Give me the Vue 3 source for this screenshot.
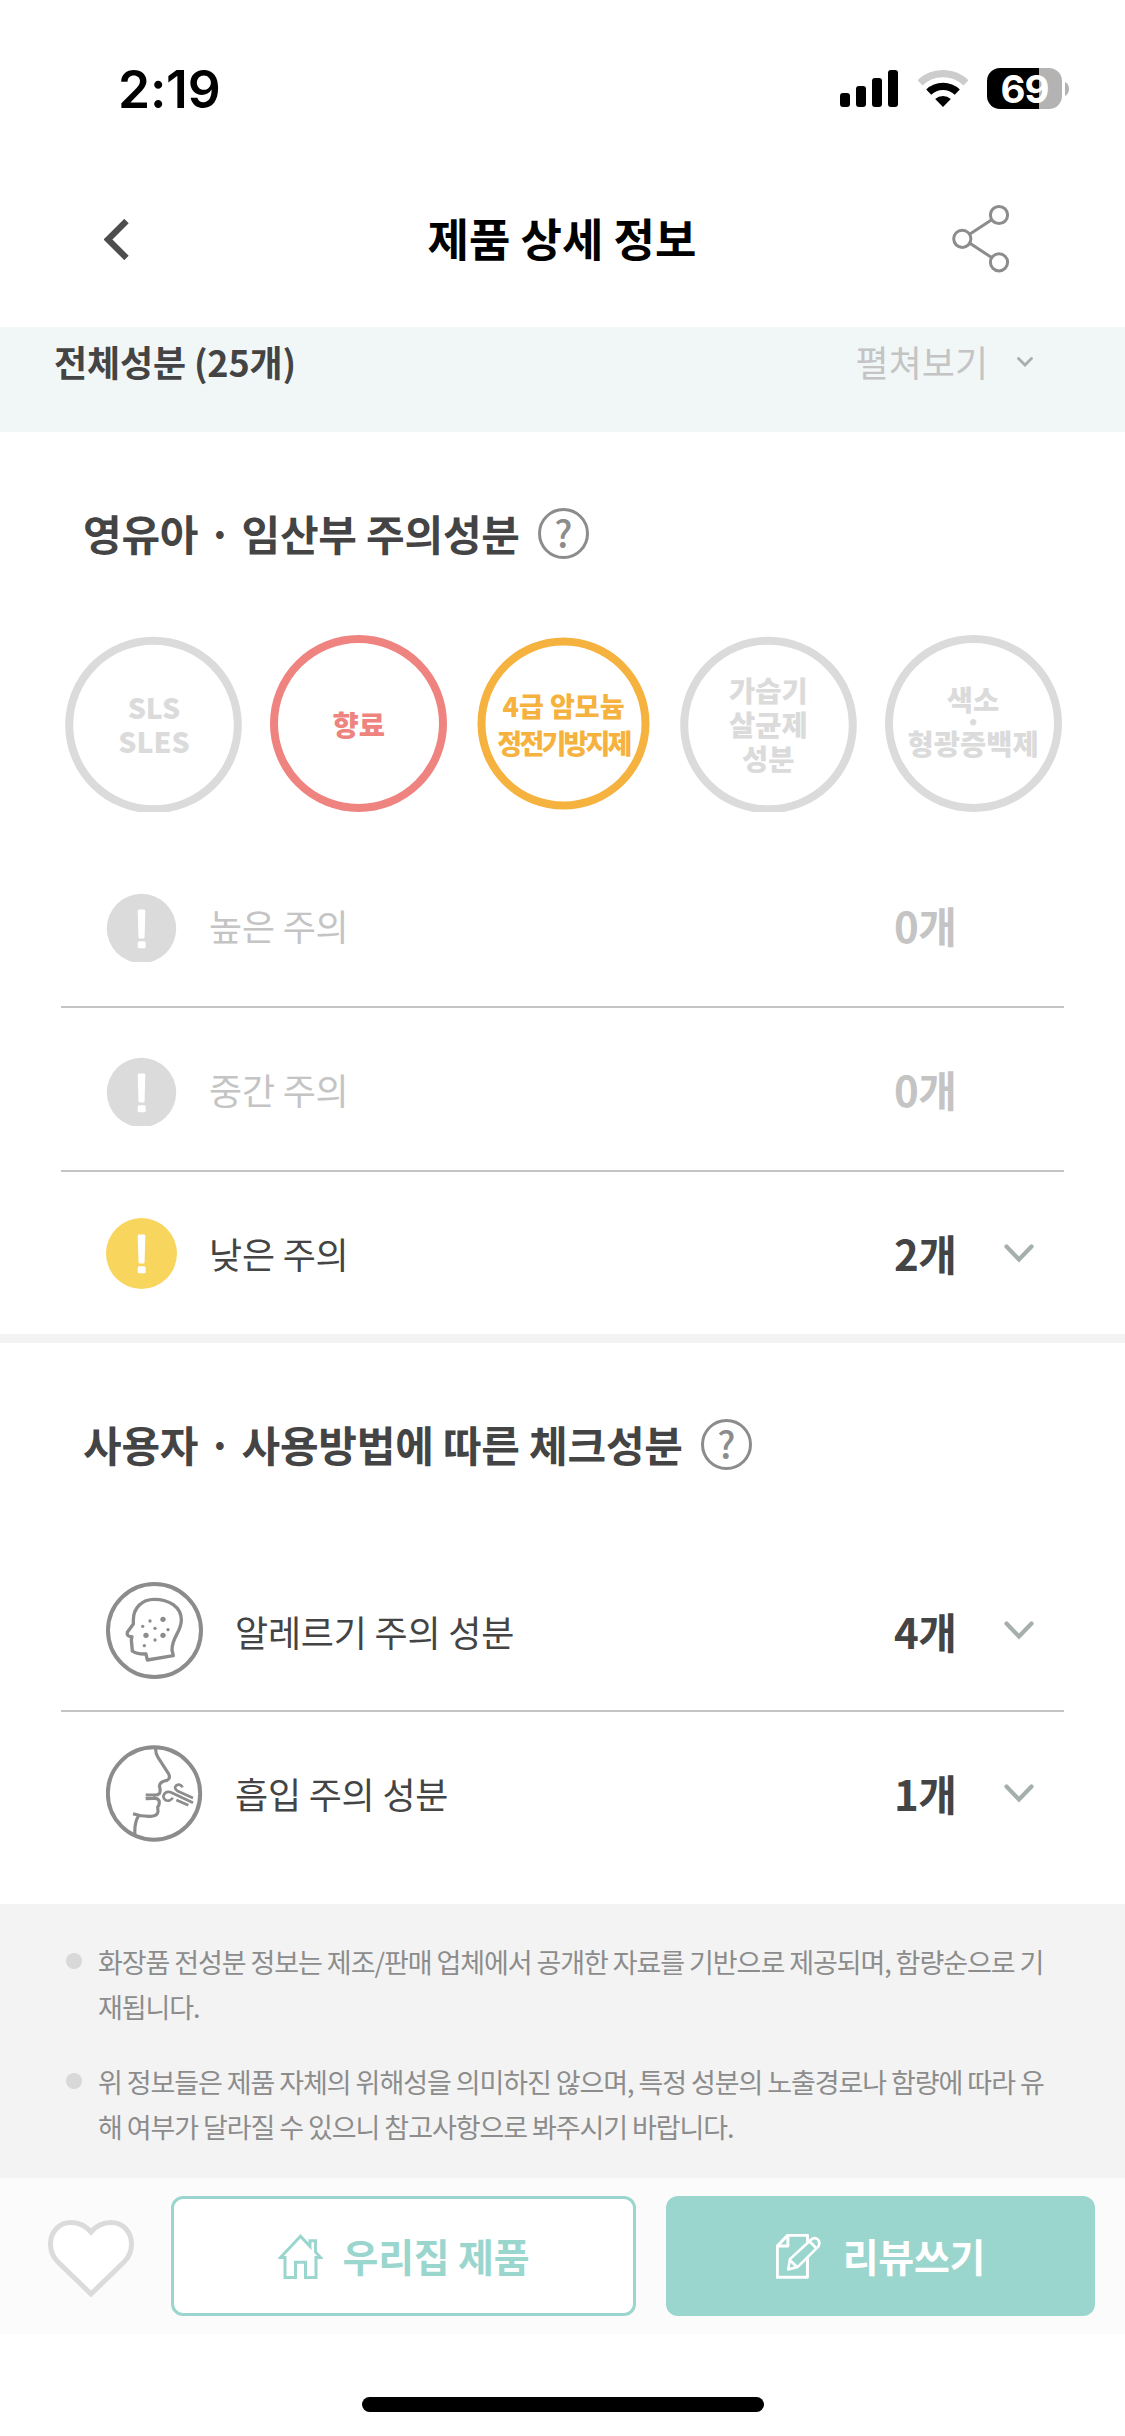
<script setup>
const tags = [
  { lines: ['SLS', 'SLES'], tone: 'off', cy: 90, r: 84.3 },
  { lines: ['향료'], tone: 'red', cy: 88.5, r: 84.5 },
  { lines: ['4급 암모늄', '정전기방지제'], tone: 'amber', cy: 88.5, r: 82 },
  { lines: ['가습기', '살균제', '성분'], tone: 'off', cy: 90, r: 84.3 },
  { lines: ['색소', '·', '형광증백제'], tone: 'off dotted', cy: 88.5, r: 84.5 },
]
const levels = [
  { name: '높은 주의', count: '0개', tone: 'off' },
  { name: '중간 주의', count: '0개', tone: 'off' },
  { name: '낮은 주의', count: '2개', tone: 'low' },
]
const checks = [
  { name: '알레르기 주의 성분', count: '4개', icon: 'head' },
  { name: '흡입 주의 성분', count: '1개', icon: 'breath' },
]
const notes = [
  ['화장품 전성분 정보는 제조/판매 업체에서 공개한 자료를 기반으로 제공되며, 함량순으로 기', '재됩니다.'],
  ['위 정보들은 제품 자체의 위해성을 의미하진 않으며, 특정 성분의 노출경로나 함량에 따라 유', '해 여부가 달라질 수 있으니 참고사항으로 봐주시기 바랍니다.'],
]
</script>

<template>
  <div class="screen">
    <div class="status">
      <span class="time">2:19</span>
      <div class="status-icons">
        <svg class="signal" viewBox="0 0 58 37">
          <rect x="0" y="23" width="10" height="14" rx="3" />
          <rect x="16" y="16" width="10" height="21" rx="3" />
          <rect x="32" y="8" width="10" height="29" rx="3" />
          <rect x="48" y="0" width="10" height="37" rx="3" />
        </svg>
        <svg class="wifi" viewBox="262 60 150 111" fill="none" stroke-width="22">
          <path d="M268 98.6A100 100 0 0 1 406 98.6" stroke="#ccc" />
          <path d="M294.2 126.1A62 62 0 0 1 379.8 126.1" stroke="#000" />
          <path d="M337 171L313.500 147A36 36 0 0 1 360.500 147Z" fill="#000" />
        </svg>
        <div class="battery"><span>69</span></div>
        <svg class="battery-cap" viewBox="0 0 4 14"><path d="M0 0Q4 2 4 7T0 14Z" fill="#b3b3b3" /></svg>
      </div>
    </div>

    <header class="header">
      <svg class="back" viewBox="0 0 25 41"><path d="M22.500 2L4 20.500L22.500 39" fill="none" stroke="#4d4d4d" stroke-width="6.200" /></svg>
      <h1>제품 상세 정보</h1>
      <svg class="share" viewBox="0 0 58 70" fill="none" stroke="#8c8c8c" stroke-width="3">
        <circle cx="47" cy="11" r="8.600" /><circle cx="10.300" cy="34.800" r="8.600" /><circle cx="47" cy="58.300" r="8.600" />
        <path d="M17.600 30.200L39.700 15.800M17.900 39.200L39.700 53.600" />
      </svg>
    </header>

    <div class="all">
      <strong>전체성분 (25개)</strong>
      <span>펼쳐보기</span>
      <svg viewBox="0 0 16 10"><path d="M1.500 1.500L8 8L14.500 1.500" fill="none" stroke="#a5b0ad" stroke-width="2.800" stroke-linecap="round" /></svg>
    </div>

    <section class="care">
      <div class="title">
        <h2>영유아 · 임산부 주의성분</h2><span class="help">?</span>
      </div>
      <div class="tags">
        <div v-for="t in tags" :key="t.lines[0]" class="tag" :class="t.tone">
          <svg viewBox="0 0 177 177"><circle cx="88.500" :cy="t.cy" :r="t.r" fill="none" stroke="currentColor" stroke-width="8" /></svg>
          <div class="label"><span v-for="l in t.lines" :key="l" :class="{ dot: l === '·', tight: l.length === 6 && !l.includes(' ') }">{{ l }}</span></div>
        </div>
      </div>
      <div class="list">
        <div v-for="l in levels" :key="l.name" class="row" :class="l.tone">
          <svg class="bang" :viewBox="l.tone === 'low' ? '0 0 71 71' : '0 0 71 68.5'">
            <circle cx="35.500" cy="35.500" :r="l.tone === 'low' ? 35.5 : 34.7" fill="currentColor" />
            <path d="M33 16.500H38Q39.300 16.500 39.300 18L38.600 44Q38.600 45.500 37.200 45.500H34Q32.600 45.500 32.500 44L31.700 18Q31.700 16.500 33 16.500Z" fill="#fff" />
            <rect x="31.700" y="48.300" width="8" height="7" rx="1.500" fill="#fff" />
          </svg>
          <span class="name">{{ l.name }}</span>
          <strong>{{ l.count }}</strong>
          <svg v-if="l.tone === 'low'" class="chev" viewBox="0 0 30 19"><path d="M2.500 2.500L15 15.500L27.500 2.500" /></svg>
        </div>
      </div>
    </section>

    <section class="check">
      <div class="title">
        <h2>사용자 · 사용방법에 따른 체크성분</h2><span class="help">?</span>
      </div>
      <div class="list">
        <div v-for="c in checks" :key="c.name" class="row">
          <svg v-if="c.icon === 'head'" class="pic" viewBox="48 66 291 291" fill="none" stroke="#8c8c8c" stroke-width="10" stroke-linejoin="round">
            <circle cx="193.500" cy="211.500" r="139.500" stroke-width="12" />
            <path d="M172 300L250 287L246 270C246 230 274 216 274 180C274 140 236 118 193 118C155 118 130 145 130 180V192L112 217Q109 227 121 230H126L124 240L127 273Q140 283 168 282Z" />
            <g fill="#8c8c8c" stroke="none">
              <circle cx="158" cy="199" r="5" /><circle cx="180" cy="183" r="5" /><circle cx="219" cy="178" r="8" />
              <circle cx="195" cy="205" r="5" /><circle cx="234" cy="209" r="5" /><circle cx="168" cy="226" r="8" />
              <circle cx="219" cy="226" r="8" /><circle cx="195" cy="240" r="5" /><circle cx="163" cy="257" r="5" />
            </g>
          </svg>
          <svg v-else class="pic" viewBox="48 553 291 291" fill="none" stroke="#8c8c8c" stroke-width="9.500" stroke-linejoin="round">
            <circle cx="192" cy="698.500" r="138.500" stroke-width="12" />
            <path d="M197 562Q196 578 204 590L235 638Q243 653 231 659Q210 662 208 676Q213 690 208 699Q203 704 190 703L167 703M167 714L190 713Q204 712 207 720Q210 731 203 739L204 753Q203 766 182 767Q155 768 129 759M145 766Q132 790 135 822" />
            <path d="M309 712L264 692Q250 683 258 675Q270 667 278 680M309 726L242 695Q226 690 220 706Q222 722 237 720Q246 717 248 711M259 718L295 734" stroke-width="8" />
          </svg>
          <span class="name">{{ c.name }}</span>
          <strong>{{ c.count }}</strong>
          <svg class="chev" viewBox="0 0 30 19"><path d="M2.500 2.500L15 15.500L27.500 2.500" /></svg>
        </div>
      </div>
    </section>

    <ul class="notes">
      <li v-for="n in notes" :key="n[0]"><p><span v-for="l in n" :key="l">{{ l }}</span></p></li>
    </ul>

    <div class="bar">
      <svg class="heart" viewBox="0 0 86 77"><path d="M43 12C37 5 30 2.500 23 2.500C11 2.500 2.500 12 2.500 24C2.500 31 5 37 10 42L43 74L76 42C81 37 83.500 31 83.500 24C83.500 12 75 2.500 63 2.500C56 2.500 49 5 43 12Z" fill="#fff" stroke="#dbdbdb" stroke-width="5" /></svg>
      <button class="btn home">
        <svg viewBox="0 0 45 45" fill="none" stroke="currentColor" stroke-width="3"><path d="M22.500 2.200L2.500 23.500H7V43.500H17.500V28.200H27.500V43.500H38V23.500H42.500L37.500 18V6.700H32V12.500Z" /></svg>
        <span>우리집 제품</span>
      </button>
      <button class="btn review">
        <svg viewBox="405 162 136 136" fill="none" stroke="currentColor" stroke-width="9" stroke-linejoin="round">
          <path d="M500 186V166H440L409 198V293H500V234M441 168V198H412" />
          <path d="M442 269L447 238L510 180Q522 170 532 179Q540 190 532 201L470 262ZM506 184L527 205M448 242L467 260" stroke-width="8" />
        </svg>
        <span>리뷰쓰기</span>
      </button>
    </div>
    <div class="foot"><i></i></div>
  </div>
</template>

<style>
body { margin: 0; background: #fff; }
</style>

<style scoped>
.screen { width: 1125px; height: 2436px; overflow: hidden; display: flex; flex-direction: column; background: #fff; color: #444; font-family: "Noto Sans CJK KR", sans-serif; white-space: nowrap; }
.screen > * { box-sizing: border-box; flex: none; }
svg { display: block; flex: none; }
h1, h2, p, ul { margin: 0; padding: 0; }
.status { height: 177px; padding: 0 56px 0 118px; display: flex; justify-content: space-between; align-items: center; color: #000; }
.time { font: 600 51.500px/60px Inter, sans-serif; letter-spacing: -0.2px; }
.status-icons { display: flex; align-items: center; }
.signal { width: 58px; height: 37px; }
.wifi { width: 50px; height: 37px; margin-left: 19.500px; }
.battery { width: 75px; height: 41px; margin-left: 19.500px; border-radius: 13px; background: linear-gradient(90deg, #000 52px, #b3b3b3 52px); display: flex; align-items: center; justify-content: center; color: #fff; font: 700 38.500px/42px Inter, sans-serif; letter-spacing: -1px; }
.battery-cap { width: 4px; height: 14px; margin-left: 3px; }
.header { height: 150px; padding: 0 115px 26px 104px; display: flex; align-items: center; justify-content: space-between; }
.back { width: 25px; height: 41px; }
h1 { margin: 0 0 2px 43px; font-size: 45px; line-height: 60px; font-weight: 700; color: #000; }
.share { width: 58px; height: 70px; }
.all { height: 105px; padding: 6px 92px 0 54px; display: flex; align-items: flex-start; background: #f1f7f7; font-size: 36px; line-height: 56px; }
.all strong { flex: 1; letter-spacing: -0.150px; }
.all span { color: #c4c4c4; margin-right: 29px; }
.all svg { width: 16px; height: 10px; margin-top: 24px; }
.care { height: 911px; border-bottom: 9px solid #f3f3f3; }
.title { display: flex; align-items: center; padding-left: 83px; height: 50px; }
.care .title { margin-top: 76px; }
.check .title { margin-top: 76px; }
h2 { font-size: 42px; line-height: 50px; font-weight: 700; letter-spacing: -0.220px; }
.help { box-sizing: border-box; width: 51px; height: 51px; margin-left: 18px; border: 3px solid #8c8c8c; border-radius: 50%; color: #8c8c8c; font-size: 37px; font-weight: 500; line-height: 42px; text-align: center; }
.tags { display: grid; grid-template-columns: repeat(5, 1fr); width: 1024px; margin: 77px 0 0 51.500px; justify-items: center; }
.tag { display: grid; width: 177px; height: 177px; }
.tag > * { grid-area: 1 / 1; }
.tag svg { width: 177px; height: 177px; overflow: hidden; }
.label { display: flex; flex-direction: column; align-items: center; justify-content: center; font-size: 28.500px; line-height: 34px; font-weight: 900; }
.off { color: #dbdbdb; }
.red { color: #ef8380; }
.amber { color: #f5b23e; }
.amber .label { font-size: 27px; line-height: 37px; }
.tight { letter-spacing: -2.800px; }
.dotted .label { padding-bottom: 6px; }
.label .dot { line-height: 10px; }
.care .list { margin-top: 32px; }
.check { height: 561px; }
.check .list { margin-top: 79px; }
.row { box-sizing: border-box; height: 164px; margin: 0 61px; padding-left: 45px; display: flex; align-items: center; border-bottom: 2px solid #c4c4c4; }
.row:last-child { border-bottom-color: transparent; }
.bang { width: 71px; }
.off .bang { margin-top: 5px; }
.name { flex: 1; margin-left: 32px; font-size: 36px; line-height: 50px; letter-spacing: -0.200px; color: #444; }
.row strong { width: 64px; font-size: 42px; line-height: 60px; letter-spacing: -0.500px; margin-right: 106px; }
.row strong:has(+ .chev) { margin-right: 46px; }
.row.off .name, .row.off strong { color: #c4c4c4; }
.low .bang { color: #f8d55d; }
.chev { width: 30px; height: 19px; margin-right: 30px; fill: none; stroke: #a5b0ad; stroke-width: 4.200px; stroke-linecap: round; }
.pic { width: 97px; height: 97px; }
.check .name { margin-left: 32px; }
.check .row:first-child { padding-top: 3px; }
.notes { height: 274px; background: #f3f3f3; list-style: none; padding: 35px 0 0 66px; font-size: 27px; line-height: 45px; letter-spacing: -1.070px; color: #8c8c8c; display: flex; flex-direction: column; gap: 30px; }
.notes li { display: flex; }
.notes li::before { content: ""; width: 16px; height: 16px; margin: 14px 16px 0 0; border-radius: 50%; background: #d8d8d8; }
.notes span { display: block; }
.bar { height: 156px; background: #fbfbfb; display: flex; align-items: center; padding-left: 48px; }
.heart { width: 86px; height: 77px; margin: 5px 37px 0 0; }
.btn { box-sizing: border-box; height: 120px; border: 3px solid #9bd6ce; border-radius: 12px; padding: 0; display: flex; align-items: center; justify-content: center; font: 700 39px/50px "Noto Sans CJK KR", sans-serif; letter-spacing: -0.250px; }
.btn svg { width: 45px; height: 45px; }
.btn span { margin-top: -2px; }
.home { width: 465px; background: #fff; color: #9bd6ce; gap: 20px; }
.review { width: 429px; margin-left: 30px; background: #9bd6ce; color: #fff; gap: 22px; }
.foot { flex: 1; display: flex; justify-content: center; padding-top: 63px; }
.foot i { width: 402px; height: 15px; border-radius: 8px; background: #000; }
</style>
